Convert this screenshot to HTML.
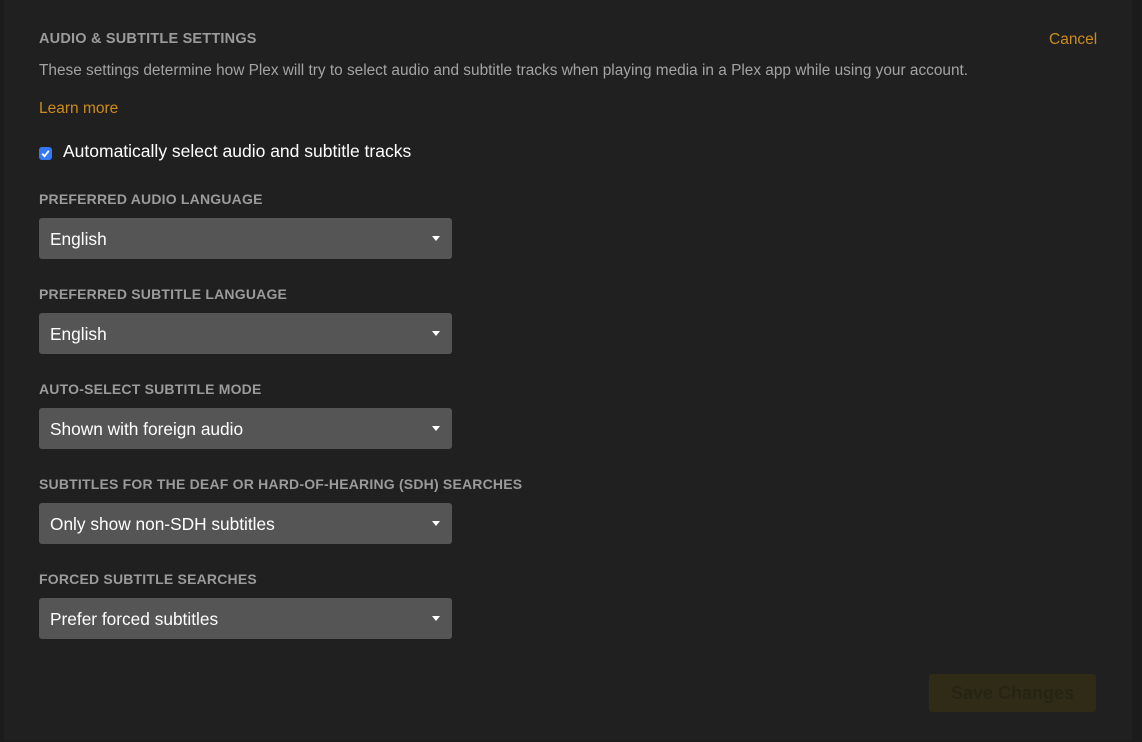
<!DOCTYPE html>
<html><head><meta charset="utf-8"><style>
html,body{margin:0;padding:0;}
body{width:1142px;height:742px;background:#1b1b1b;position:relative;overflow:hidden;font-family:"Liberation Sans",sans-serif;}
.panel{position:absolute;left:4px;top:0;width:1128px;height:740px;background:#202020;}
.abs{position:absolute;white-space:nowrap;}
.h{left:39px;font-size:14px;font-weight:bold;color:#9b9b9b;letter-spacing:0.2px;}
.sel{position:absolute;left:39px;width:413px;height:41px;background:#555;border-radius:3px;color:#fff;font-size:17.3px;}
.sel span{position:absolute;left:11px;top:11px;}
.sel i{position:absolute;right:12px;top:18px;width:0;height:0;border-left:4.5px solid transparent;border-right:4.5px solid transparent;border-top:5px solid #fff;}
</style></head><body>
<div class="panel"></div>
<div class="abs h" style="top:31px;font-size:14.5px">AUDIO &amp; SUBTITLE SETTINGS</div>
<div class="abs" style="left:1049px;top:31px;font-size:15.5px;color:#cc8b1e">Cancel</div>
<div class="abs" style="left:39px;top:62px;font-size:15.4px;color:#a3a3a3">These settings determine how Plex will try to select audio and subtitle tracks when playing media in a Plex app while using your account.</div>
<div class="abs" style="left:39px;top:100px;font-size:15.5px;color:#cc8b1e">Learn more</div>
<div class="abs" style="left:39px;top:147px;width:13px;height:13px;background:#3478f6;border-radius:3px"><svg width="13" height="13" viewBox="0 0 13 13"><path d="M3.2 6.8 L5.5 9.2 L9.8 3.8" stroke="#fff" stroke-width="1.8" fill="none"/></svg></div>
<div class="abs" style="left:63px;top:141px;font-size:17.5px;color:#fff">Automatically select audio and subtitle tracks</div>

<div class="abs h" style="top:191px">PREFERRED AUDIO LANGUAGE</div>
<div class="sel" style="top:218px"><span>English</span><i></i></div>
<div class="abs h" style="top:286px">PREFERRED SUBTITLE LANGUAGE</div>
<div class="sel" style="top:313px"><span>English</span><i></i></div>
<div class="abs h" style="top:381px">AUTO-SELECT SUBTITLE MODE</div>
<div class="sel" style="top:408px"><span>Shown with foreign audio</span><i></i></div>
<div class="abs h" style="top:476px">SUBTITLES FOR THE DEAF OR HARD-OF-HEARING (SDH) SEARCHES</div>
<div class="sel" style="top:503px"><span>Only show non-SDH subtitles</span><i></i></div>
<div class="abs h" style="top:571px">FORCED SUBTITLE SEARCHES</div>
<div class="sel" style="top:598px"><span>Prefer forced subtitles</span><i></i></div>

<div class="abs" style="left:929px;top:674px;width:167px;height:38px;background:#2f2b17;border-radius:3px;color:#262414;font-size:18px;font-weight:bold;text-align:center;line-height:38px">Save Changes</div>
</body></html>
